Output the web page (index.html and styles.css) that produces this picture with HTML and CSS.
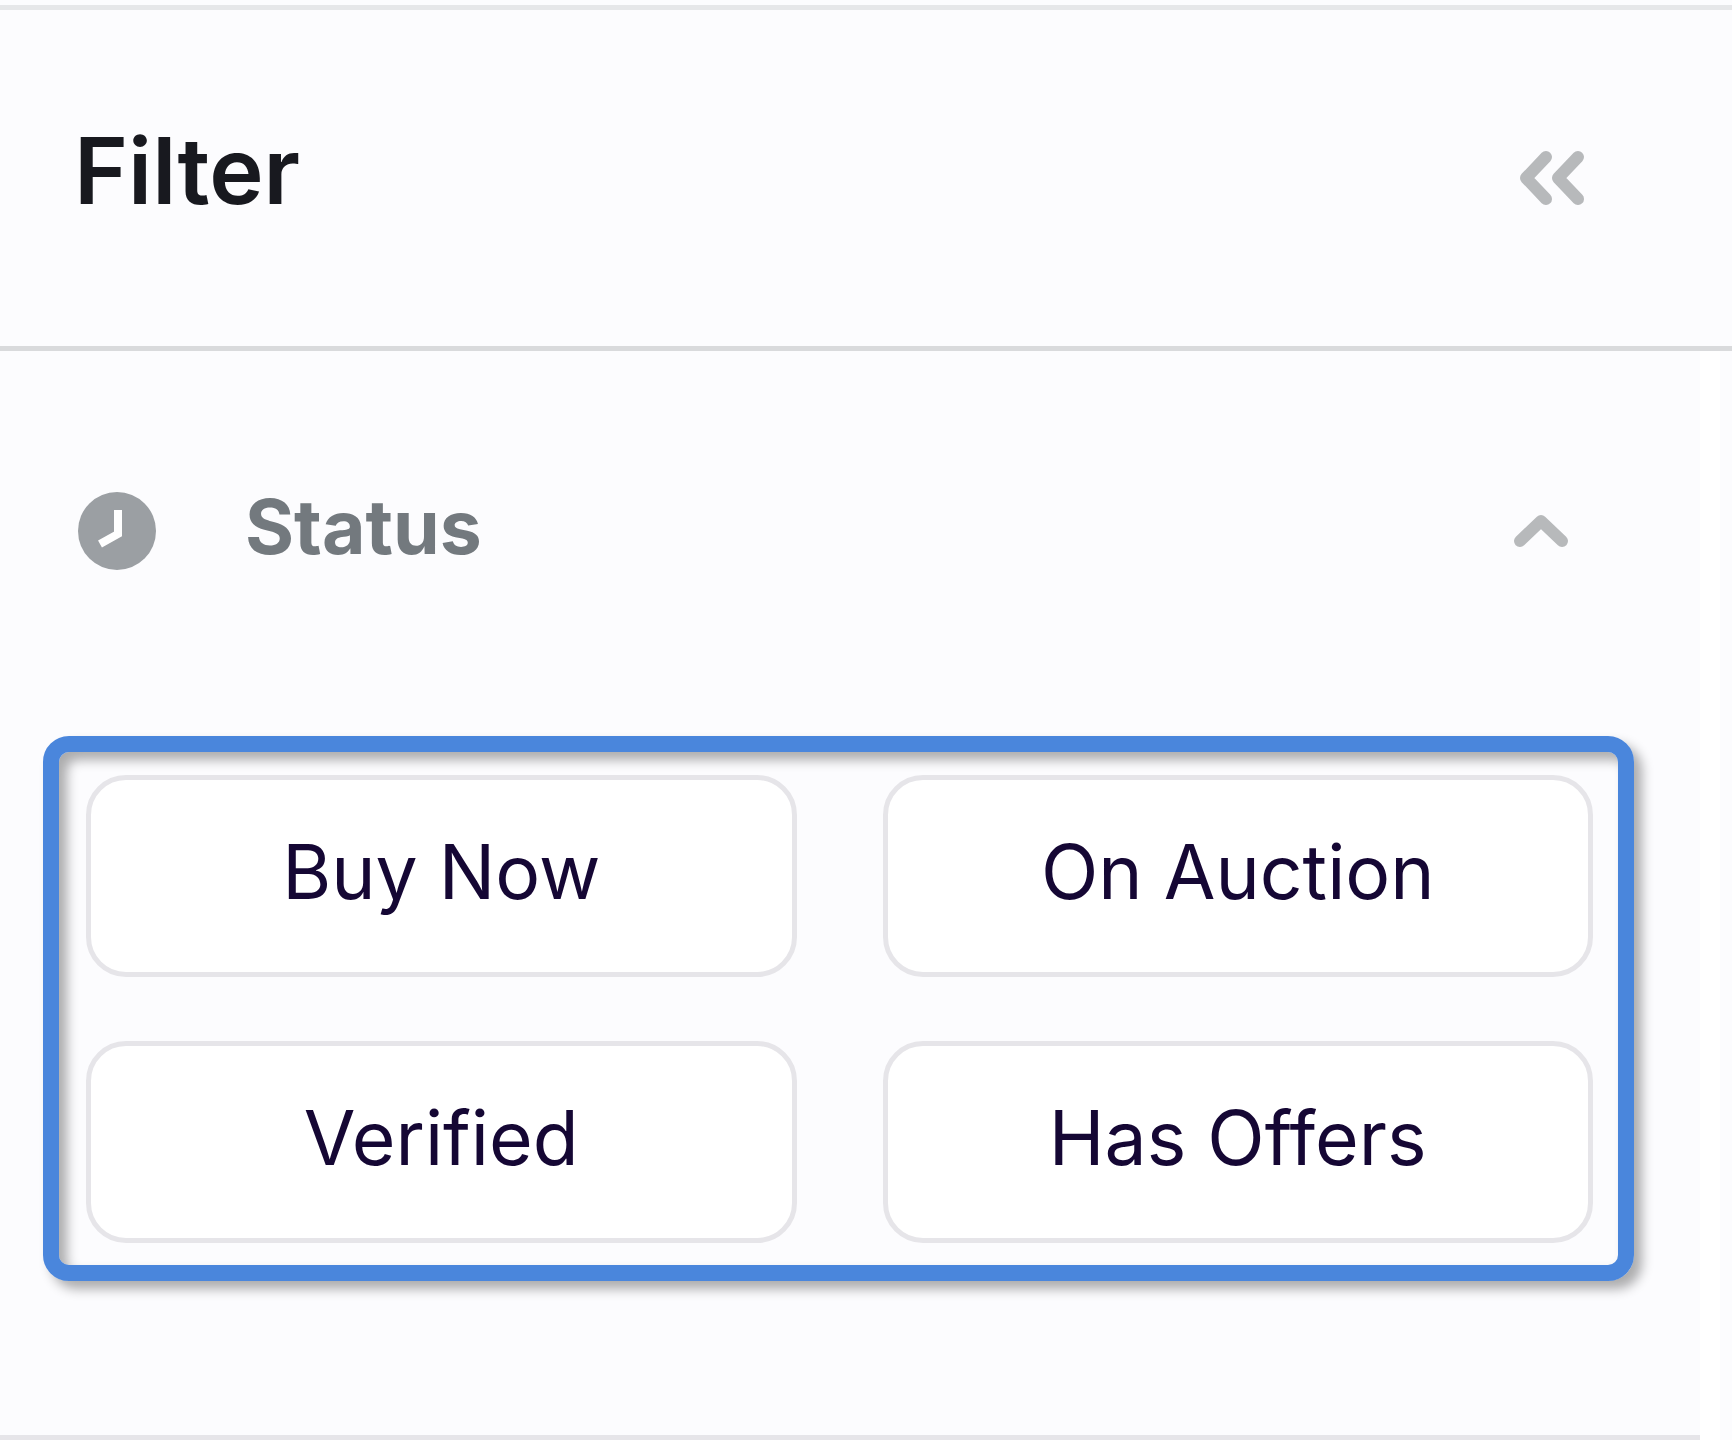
FILE: index.html
```html
<!DOCTYPE html>
<html lang="en">
<head>
    <meta charset="UTF-8">
    <meta name="viewport" content="width=device-width, initial-scale=1.0">
    <title>Filter</title>
    <link rel="stylesheet" href="styles.css">
</head>
<body>
    <div class="sidebar">
        <div class="header">
            <h1>Filter</h1>
            <button type="button" class="icon-btn" aria-label="Collapse filters">
                <svg width="64" height="54" viewBox="0 0 64 54">
                    <path d="M26 6L6 27l20 21M58 6L38 27l20 21"/>
                </svg>
            </button>
        </div>
        <div class="section">
            <div class="section-title">
                <svg class="clock" width="80" height="80" viewBox="0 0 80 80">
                    <circle cx="40" cy="40" r="39"/>
                    <path d="M41 19v24L23 53"/>
                </svg>
                <h2>Status</h2>
                <button type="button" class="icon-btn chevron" aria-label="Hide status">
                    <svg width="54" height="34" viewBox="0 0 54 34">
                        <path d="M6 27L27 7l21 20"/>
                    </svg>
                </button>
            </div>
            <div class="options">
                <button type="button" class="option">Buy Now</button>
                <button type="button" class="option">On Auction</button>
                <button type="button" class="option">Verified</button>
                <button type="button" class="option">Has Offers</button>
            </div>
        </div>
    </div>
</body>
</html>
```
FILE: styles.css
```css
* {
    box-sizing: border-box;
}
body {
    font-family: Inter, "Liberation Sans", sans-serif;
    background: #fcfcfe;
    margin: 0;
    padding-top: 5px;
}
.header {
    display: flex;
    align-items: center;
    justify-content: space-between;
    padding: 107px 148px 107px 74px;
    border-top: 5px solid #e6e7e9;
    border-bottom: 5px solid #d9dadc;
}
h1, h2 {
    margin: 0;
    line-height: 100px;
}
h1 {
    color: #18191f;
    font-size: 92px;
    font-weight: 600;
    line-height: 108px;
    padding-bottom: 14px;
}
h2 {
    color: #73797e;
    font-size: 75px;
    font-weight: 700;
    padding-bottom: 8px;
}
.icon-btn {
    display: flex;
    padding: 0;
    border: none;
    background: none;
    cursor: pointer;
}
.icon-btn path {
    fill: none;
    stroke: #b7b9bb;
    stroke-width: 12;
    stroke-linecap: round;
    stroke-linejoin: round;
}
/* white strip on the right is the scrollbar track */
.section {
    margin-right: 32px;
    padding: 126px 66px 154px 43px;
    border-bottom: 5px solid #e6e5e9;
    box-shadow: 20px 0 0 #fff;
}
.section-title {
    display: flex;
    align-items: center;
    padding-left: 34px;
    margin-bottom: 151px;
}
.clock {
    margin-right: 88px;
}
.clock circle {
    fill: #9b9fa3;
}
.clock path {
    fill: none;
    stroke: #fff;
    stroke-width: 8;
}
.chevron {
    margin-left: auto;
    margin-right: 66px;
}
.options {
    display: grid;
    grid-template-columns: 1fr 1fr;
    gap: 64px 86px;
    padding: 23px 25px 22px 27px;
    border: 16px solid #4a86dc;
    border-radius: 26px;
    box-shadow: 8px 8px 12px rgba(0, 0, 0, 0.32), inset 8px 8px 12px rgba(0, 0, 0, 0.32);
}
.option {
    height: 202px;
    padding: 0 0 10px;
    border: 5px solid #e6e5e9;
    border-radius: 40px;
    background: #fff;
    color: #150734;
    font-family: inherit;
    font-size: 75px;
    cursor: pointer;
}
```
